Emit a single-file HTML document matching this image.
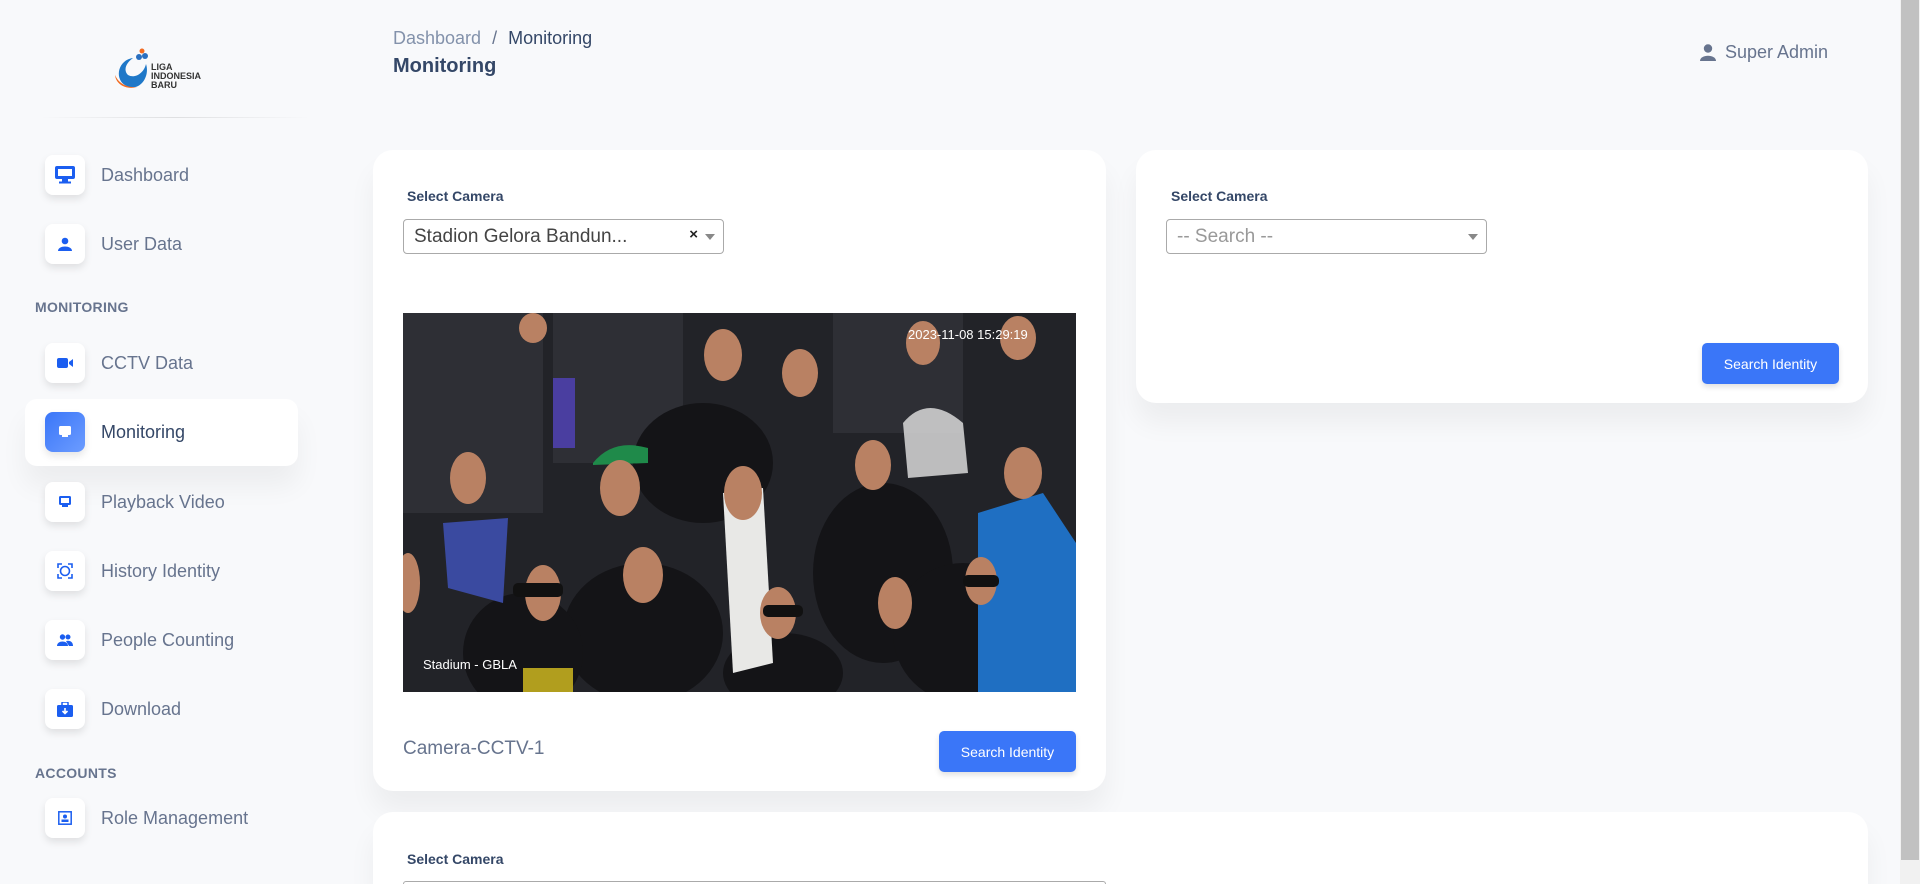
<!DOCTYPE html>
<html><head><meta charset="utf-8"><style>
*{margin:0;padding:0;box-sizing:border-box}
html{width:1920px;height:884px;overflow:hidden}
body{width:1920px;height:884px;overflow:hidden;background:#f8f9fb;font-family:"Liberation Sans",sans-serif;position:relative;color:#344767}
.abs{position:absolute}
.logo{left:113px;top:48px}
.hr{left:40px;top:117px;width:270px;height:1px;background:linear-gradient(90deg,rgba(0,0,0,0),rgba(0,0,0,.1),rgba(0,0,0,0))}
.item{position:absolute;left:45px;height:40px;display:flex;align-items:center}
.ic{width:40px;height:40px;border-radius:8px;background:#fff;box-shadow:0 4px 8px rgba(0,0,0,.1);display:flex;align-items:center;justify-content:center}
.item span{margin-left:56px;position:absolute;left:0;white-space:nowrap;font-size:18px;color:#67748e}
.sec{position:absolute;left:35px;font-size:14px;font-weight:bold;color:#67748e;letter-spacing:.3px}
.active{left:25px;top:399px;width:273px;height:67px;background:#fff;border-radius:12px;box-shadow:0 20px 27px rgba(0,0,0,.05)}
.card{background:#fff;border-radius:20px;box-shadow:0 20px 27px rgba(0,0,0,.05)}
.lbl{font-size:14px;font-weight:bold;color:#344767}
.sel{border:1px solid #aaa;border-radius:4px;height:35px;background:#fff;font-size:19px;padding:6px 10px;color:#444}
.btn{background:#3a76f8;color:#fff;border-radius:5px;font-size:14px;display:flex;align-items:center;justify-content:center;box-shadow:0 3px 6px rgba(0,0,0,.12)}
.arrow{position:absolute;right:8px;top:14px;border-left:5px solid transparent;border-right:5px solid transparent;border-top:6px solid #888}
</style></head><body>
<div class="abs logo"><svg width="100" height="44" viewBox="0 0 100 44"><path d="M20 10 C4 12 0 34 16 39 C28 42 37 28 33 16 C31 25 22 31 15 27 C10 22 13 15 20 10Z" fill="#1f78c8"/><path d="M2 27 C3 37 14 42 24 39 C12 40 5 34 2 27Z" fill="#f26b21"/><circle cx="26" cy="9" r="3" fill="#2a6fc0"/><circle cx="32" cy="8" r="3" fill="#2a6fc0"/><circle cx="29" cy="3" r="2.5" fill="#f26b21"/><text x="38" y="22" font-size="9" font-weight="bold" fill="#333" font-family="Liberation Sans">LIGA</text><text x="38" y="31" font-size="9" font-weight="bold" fill="#333" font-family="Liberation Sans">INDONESIA</text><text x="38" y="40" font-size="9" font-weight="bold" fill="#333" font-family="Liberation Sans">BARU</text></svg></div>
<div class="abs hr"></div>
<div class="abs active"></div>
<div class="item" style="top:155px"><div class="ic"><svg width="20" height="18" viewBox="0 0 20 18"><rect x="0" y="0" width="20" height="13" rx="2" fill="#1b5ef0"/><rect x="3" y="3" width="14" height="7" fill="#fff"/><rect x="7" y="13" width="6" height="3" fill="#1b5ef0"/><rect x="4" y="15.5" width="12" height="2" fill="#1b5ef0"/></svg></div><span>Dashboard</span></div>
<div class="item" style="top:224px"><div class="ic"><svg width="14" height="14" viewBox="0 0 14 14"><circle cx="7" cy="4" r="3.3" fill="#1b5ef0"/><path d="M0 14 C0 8 14 8 14 14Z" fill="#1b5ef0"/></svg></div><span>User Data</span></div>
<div class="sec" style="top:299px">MONITORING</div>
<div class="item" style="top:343px"><div class="ic"><svg width="16" height="10" viewBox="0 0 16 10"><rect x="0" y="0" width="11" height="10" rx="2" fill="#1b5ef0"/><path d="M12 4 L16 1 V9 L12 6Z" fill="#1b5ef0"/></svg></div><span>CCTV Data</span></div>
<div class="item" style="top:412px"><div class="ic" style="background:linear-gradient(135deg,#3a76f8,#6c9cff)"><svg width="14" height="14" viewBox="0 0 14 14"><rect x="1" y="1" width="12" height="9" rx="1.5" fill="#fff"/><rect x="4" y="10" width="6" height="2" fill="#fff"/></svg></div><span style="color:#344767">Monitoring</span></div>
<div class="item" style="top:482px"><div class="ic"><svg width="14" height="14" viewBox="0 0 14 14"><rect x="1" y="1" width="12" height="9" rx="1.5" fill="#1b5ef0"/><rect x="3" y="3" width="8" height="5" fill="#fff"/><rect x="4" y="10" width="6" height="2" fill="#1b5ef0"/></svg></div><span>Playback Video</span></div>
<div class="item" style="top:551px"><div class="ic"><svg width="16" height="16" viewBox="0 0 16 16" fill="none" stroke="#1b5ef0" stroke-width="1.6"><path d="M1 5V1h4M11 1h4v4M15 11v4h-4M5 15H1v-4"/><circle cx="8" cy="8" r="4.5"/></svg></div><span>History Identity</span></div>
<div class="item" style="top:620px"><div class="ic"><svg width="16" height="12" viewBox="0 0 16 12"><circle cx="5.5" cy="3" r="2.7" fill="#1b5ef0"/><circle cx="11" cy="3" r="2.5" fill="#1b5ef0"/><path d="M0 12C0 6 11 6 11 12Z" fill="#1b5ef0"/><path d="M9 7C13 6 16 8 16 12H12Z" fill="#1b5ef0"/></svg></div><span>People Counting</span></div>
<div class="item" style="top:689px"><div class="ic"><svg width="16" height="15" viewBox="0 0 16 15"><rect x="0" y="3" width="16" height="12" rx="1.5" fill="#1b5ef0"/><rect x="5" y="0" width="6" height="4" rx="1" fill="none" stroke="#1b5ef0" stroke-width="1.5"/><path d="M8 6v5M5.5 9l2.5 2.5L10.5 9" stroke="#fff" stroke-width="1.6" fill="none"/></svg></div><span>Download</span></div>
<div class="sec" style="top:765px">ACCOUNTS</div>
<div class="item" style="top:798px"><div class="ic"><svg width="14" height="14" viewBox="0 0 14 14"><rect x="0.8" y="0.8" width="12.4" height="12.4" fill="none" stroke="#1b5ef0" stroke-width="1.5"/><circle cx="7" cy="5.5" r="2" fill="#1b5ef0"/><rect x="3.5" y="8.5" width="7" height="2.5" fill="#1b5ef0"/></svg></div><span>Role Management</span></div>

<div class="abs" style="left:393px;top:28px;font-size:18px;color:#8392ab">Dashboard <span style="margin:0 6px;color:#67748e">/</span> <span style="color:#344767">Monitoring</span></div>
<div class="abs" style="left:393px;top:55px;font-size:20px;font-weight:bold;color:#344767">Monitoring</div>
<div class="abs" style="left:1700px;top:42px;display:flex;align-items:center;font-size:18px;color:#67748e"><svg width="16" height="17" viewBox="0 0 16 17"><circle cx="8" cy="4.5" r="4.2" fill="#67748e"/><path d="M0 17C0 10 16 10 16 17Z" fill="#67748e"/></svg><span style="margin-left:9px">Super Admin</span></div>

<div class="abs card" style="left:373px;top:150px;width:733px;height:641px"></div>
<div class="abs lbl" style="left:407px;top:188px">Select Camera</div>
<div class="abs sel" style="left:403px;top:219px;width:321px">Stadion Gelora Bandun...<span style="position:absolute;right:25px;top:6px;font-size:15px;font-weight:bold;color:#222">×</span><div class="arrow"></div></div>
<div class="abs" style="left:403px;top:313px;width:673px;height:379px;overflow:hidden;background:#1c1d22">
<svg width="673" height="379" viewBox="0 0 673 379">
<rect width="673" height="379" fill="#222328"/>
<g fill="#2e2f35"><rect x="0" y="0" width="140" height="200"/><rect x="150" y="0" width="130" height="150"/><rect x="430" y="0" width="130" height="120"/></g>
<g fill="#141417"><ellipse cx="300" cy="150" rx="70" ry="60"/><ellipse cx="480" cy="260" rx="70" ry="90"/><ellipse cx="240" cy="320" rx="80" ry="70"/><ellipse cx="560" cy="320" rx="70" ry="70"/><ellipse cx="120" cy="340" rx="60" ry="60"/><ellipse cx="380" cy="360" rx="60" ry="40"/></g>
<path d="M575 200 L640 180 L673 230 L673 379 L575 379Z" fill="#1f6fc2"/>
<path d="M320 180 L360 175 L370 350 L330 360Z" fill="#e8e8e6"/>
<path d="M40 210 L105 205 L100 290 L45 275Z" fill="#3a4aa0"/>
<path d="M190 150 Q210 125 245 135 L245 150 L190 152Z" fill="#1f8a4a"/>
<rect x="150" y="65" width="22" height="70" fill="#4a3ea0"/>
<g fill="#b98163">
<ellipse cx="320" cy="42" rx="19" ry="26"/><ellipse cx="397" cy="60" rx="18" ry="24"/><ellipse cx="520" cy="30" rx="17" ry="22"/><ellipse cx="615" cy="25" rx="18" ry="22"/><ellipse cx="130" cy="15" rx="14" ry="15"/>
<ellipse cx="65" cy="165" rx="18" ry="26"/><ellipse cx="217" cy="175" rx="20" ry="28"/><ellipse cx="340" cy="180" rx="19" ry="27"/><ellipse cx="470" cy="152" rx="18" ry="25"/><ellipse cx="620" cy="160" rx="19" ry="26"/>
<ellipse cx="140" cy="280" rx="18" ry="28"/><ellipse cx="240" cy="262" rx="20" ry="28"/><ellipse cx="375" cy="300" rx="18" ry="26"/><ellipse cx="492" cy="290" rx="17" ry="26"/><ellipse cx="578" cy="268" rx="16" ry="24"/><ellipse cx="5" cy="270" rx="12" ry="30"/>
</g>
<g fill="#111"><rect x="110" y="270" width="50" height="14" rx="5"/><rect x="360" y="292" width="40" height="12" rx="5"/><rect x="560" y="262" width="36" height="12" rx="5"/></g>
<path d="M500 110 Q525 80 560 110 L565 160 L505 165Z" fill="#d8d8d8" opacity=".85"/>
<text x="505" y="26" font-size="13" fill="#fff" font-family="Liberation Sans">2023-11-08 15:29:19</text>
<text x="20" y="356" font-size="13" fill="#fff" font-family="Liberation Sans">Stadium - GBLA</text>
<rect x="120" y="355" width="50" height="24" fill="#d8c020" opacity=".8"/>
</svg></div>
<div class="abs" style="left:403px;top:738px;font-size:19px;color:#67748e">Camera-CCTV-1</div>
<div class="abs btn" style="left:939px;top:731px;width:137px;height:41px">Search Identity</div>

<div class="abs card" style="left:1136px;top:150px;width:732px;height:253px"></div>
<div class="abs lbl" style="left:1171px;top:188px">Select Camera</div>
<div class="abs sel" style="left:1166px;top:219px;width:321px;color:#999">-- Search --<div class="arrow"></div></div>
<div class="abs btn" style="left:1702px;top:343px;width:137px;height:41px">Search Identity</div>

<div class="abs card" style="left:373px;top:812px;width:1495px;height:72px;border-radius:20px 20px 0 0"></div>
<div class="abs lbl" style="left:407px;top:851px">Select Camera</div>
<div class="abs" style="left:403px;top:881px;width:703px;height:3px;border:1px solid #aaa;border-bottom:none;border-radius:4px 4px 0 0"></div>

<div class="abs" style="left:1900px;top:0;width:20px;height:884px;background:#f1f1f1"></div>
<div class="abs" style="left:1901px;top:0;width:18px;height:860px;background:#c1c1c1"></div>
</body></html>
